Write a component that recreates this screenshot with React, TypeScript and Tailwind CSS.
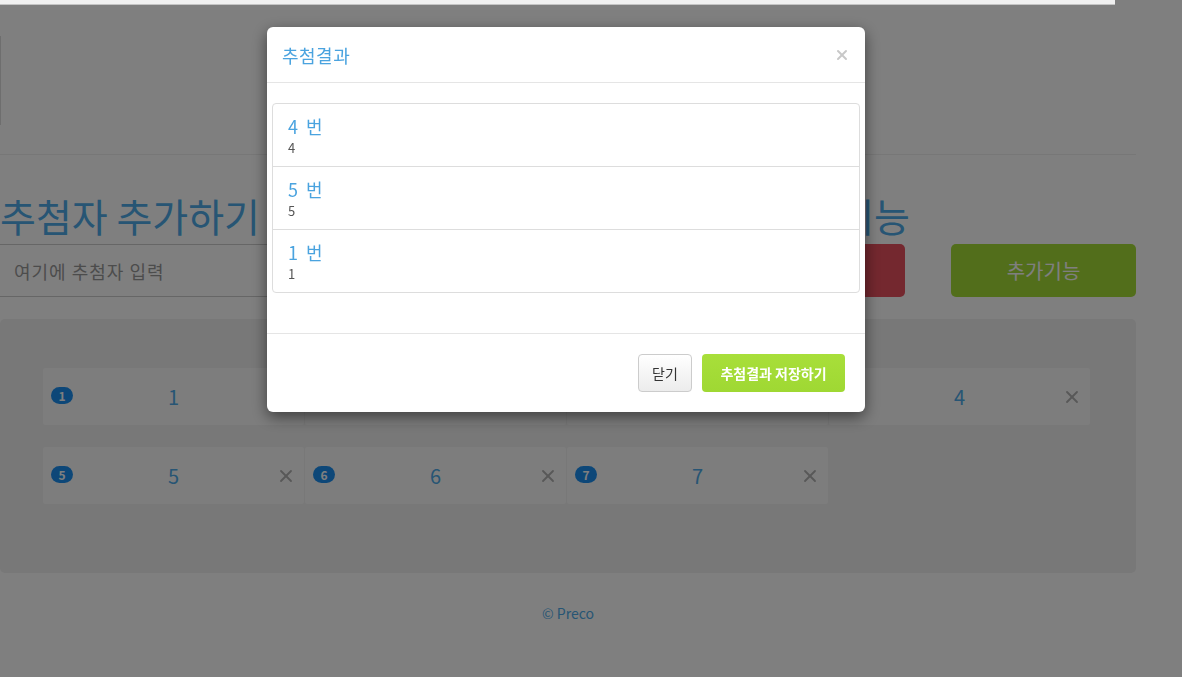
import { X } from "lucide-react";

const results = [
  { no: 4, label: "4" },
  { no: 5, label: "5" },
  { no: 1, label: "1" },
];

const entries = [1, 2, 3, 4, 5, 6, 7];

function EntryCard({ n }: { n: number }) {
  return (
    <div className="relative flex h-[57px] items-center justify-center rounded-[2px] bg-[#fafafa]">
      <span className="absolute left-2 top-[19px] flex h-[17px] w-[22px] items-center justify-center rounded-full bg-[#1a8ff0] text-[12px] font-bold leading-none text-white">
        {n}
      </span>
      <span className="text-[20px] leading-none text-[#4eabe8]">{n}</span>
      <X className="absolute right-[8px] top-[19px] h-[20px] w-[20px] text-[#b0b0b0]" strokeWidth={2.2} />
    </div>
  );
}

export default function App() {
  return (
    <div className="min-h-screen bg-white pt-[36px] font-['Noto_Sans_CJK_KR','Noto_Sans',sans-serif] text-[#333]">
      <div className="w-[1136px]">
        <div className="h-[89px] border-l border-[#ddd]" />
        <div className="mt-[29px] border-t border-[#eee]" />

        <div className="mt-[36px] flex gap-5">
          <div className="w-[469px]">
            <h2 className="text-[39px] leading-[48px] text-[#4eabe8]">추첨자 추가하기</h2>
            <input
              className="mt-[5px] h-[53px] w-full border-y border-[#ccc] px-[14px] text-[18px] tracking-[1px] outline-none placeholder:text-[#999]"
              placeholder="여기에 추첨자 입력"
            />
          </div>
          <div className="flex-1">
            <h2 className="text-[39px] leading-[48px] text-[#4eabe8]">랜덤 추첨하기 및 추가기능</h2>
            <div className="mt-[5px] flex gap-[46px]">
              <button className="h-[53px] w-[185px] rounded-[5px] bg-[#3aa0e8] text-[20px] text-white">추첨하기</button>
              <button className="h-[53px] w-[185px] rounded-[5px] bg-[#e8505e] text-[20px] text-white">초기화</button>
              <button className="h-[53px] w-[185px] rounded-[5px] bg-[#a4dc36] text-[20px] text-white">추가기능</button>
            </div>
          </div>
        </div>

        <div className="mt-[22px] rounded-[5px] bg-[#f0f0f0] px-[43px] pb-[69px] pt-[49px]">
          <div className="grid w-[1047px] grid-cols-4 gap-x-px gap-y-[22px]">
            {entries.map((n) => (
              <EntryCard key={n} n={n} />
            ))}
          </div>
        </div>

        <p className="mt-[30px] text-center text-[14px] leading-[20px] text-[#4eabe8]">© Preco</p>
      </div>

      {/* modal */}
      <div className="fixed inset-0 bg-black/50">
        <div className="ml-[267px] mt-[27px] w-[598px] rounded-[6px] bg-white shadow-[0_5px_15px_rgba(0,0,0,0.5)]">
          <div className="flex h-[56px] items-center justify-between border-b border-[#e5e5e5] px-[15px]">
            <h4 className="text-[18px] tracking-[0.5px] leading-none text-[#4aa3df]">추첨결과</h4>
            <X className="h-[16px] w-[16px] text-[#c8c8c8]" strokeWidth={3} />
          </div>
          <div className="px-[5px] pb-[40px] pt-[20px]">
            <div className="divide-y divide-[#ddd] rounded-[4px] border border-[#ddd]">
              {results.map((r) => (
                <div key={r.no} className="px-[15px] pb-[9px] pt-[10px]">
                  <div className="text-[18px] leading-[24px] text-[#4aa3df]">
                    {r.no}&nbsp; 번
                  </div>
                  <div className="text-[13px] leading-[19px] text-[#555]">{r.label}</div>
                </div>
              ))}
            </div>
          </div>
          <div className="flex justify-end gap-[10px] border-t border-[#e5e5e5] px-[20px] pb-[20px] pt-[20px]">
            <button className="h-[38px] w-[54px] rounded-[4px] border border-[#ccc] bg-gradient-to-b from-white to-[#ececec] text-[14px] text-[#333]">
              닫기
            </button>
            <button className="h-[38px] w-[143px] rounded-[4px] bg-gradient-to-b from-[#a8df3a] to-[#9fd833] text-[14px] font-bold text-white">
              추첨결과 저장하기
            </button>
          </div>
        </div>
      </div>

      <div className="fixed left-0 top-0 h-[5px] w-[1115px] border-b border-[#c4c4c4] bg-[#f0f0f0]" />
    </div>
  );
}
